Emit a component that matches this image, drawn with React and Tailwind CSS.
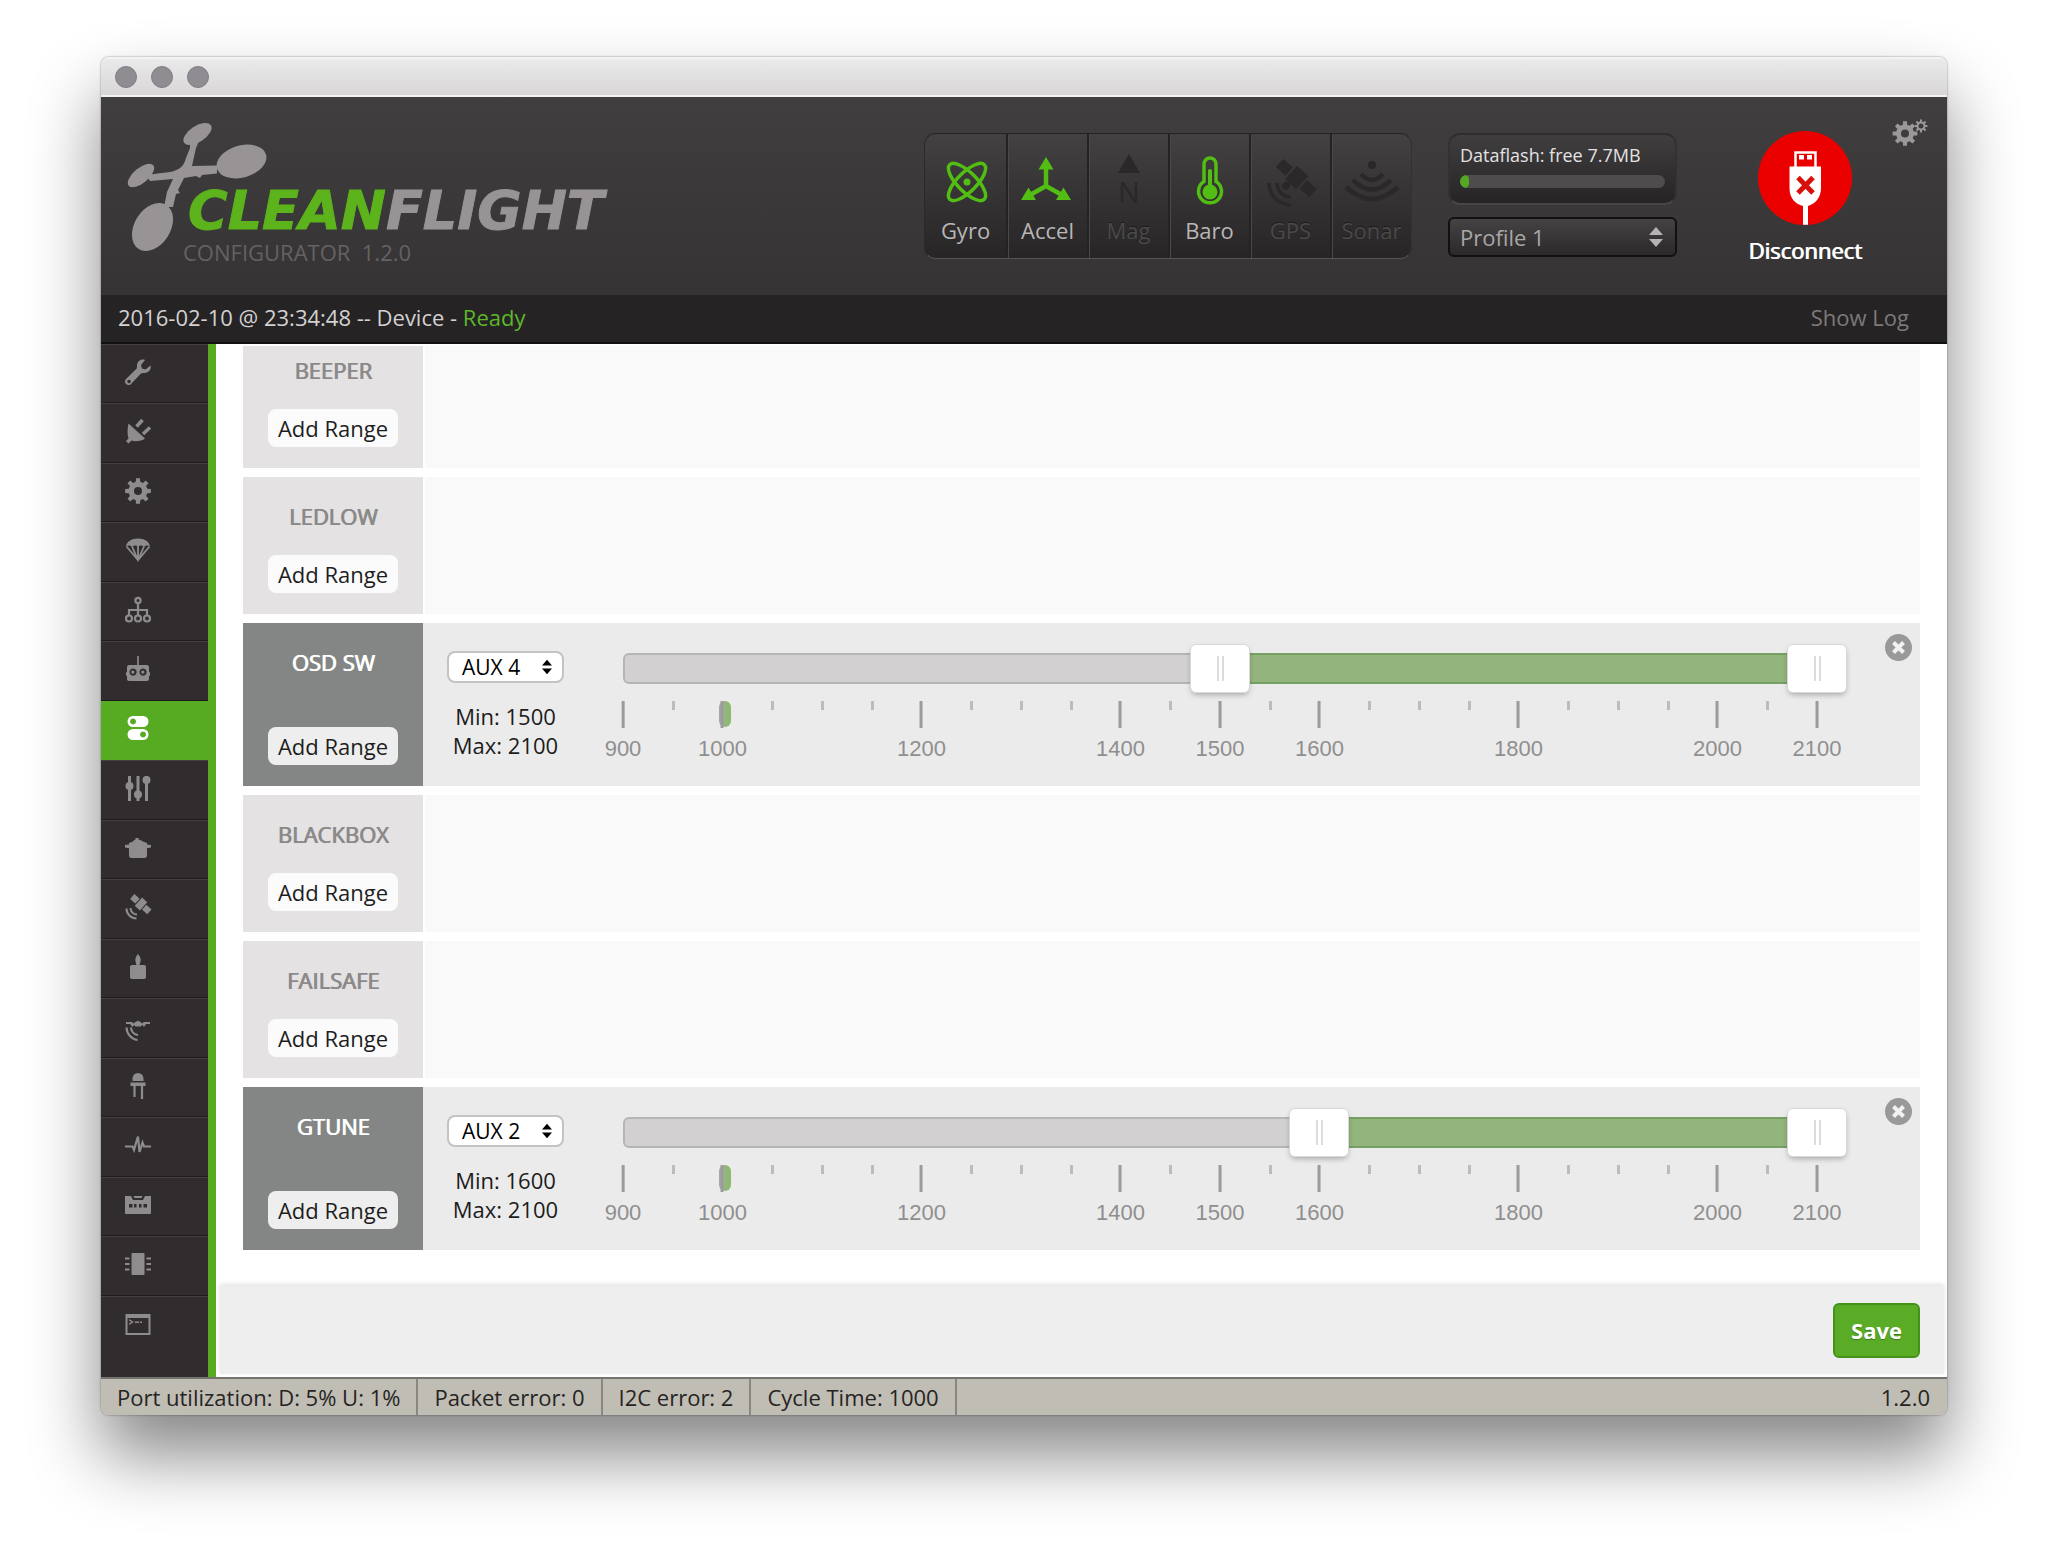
import React, { useState } from "react";

/* ---------- Logo ---------- */

function Logo() {
  return (
    <svg viewBox="120 115 500 156" className="h-[156px] w-[500px] shrink-0" role="img" aria-label="Cleanflight Configurator 1.2.0">
      <g fill="#989496">
        <ellipse cx="197.500" cy="134" rx="16" ry="8" transform="rotate(-33 197.500 134)" />
        <ellipse cx="241.500" cy="161.500" rx="25.500" ry="16" transform="rotate(-16 241.500 161.500)" />
        <ellipse cx="141" cy="175.500" rx="16" ry="7.500" transform="rotate(-40 141 175.500)" />
        <ellipse cx="152.500" cy="227" rx="26" ry="18" transform="rotate(-58 152.500 227)" />
        <path d="M190 138L200 139L196 148L192 166L217 165.500V173.500L202 175L200 178L196 176L184 178L178 190L180 193L176 194L173 207H164L167 192L173 179L150 181L146 175L170 172C180 170 184 166 186 158L190 148Z" />
      </g>
      <text x="188" y="229" fill="#5cb31c" stroke="#5cb31c" fontFamily="DejaVu Sans" fontWeight="700" fontStyle="italic" fontSize="54">
        CLEAN<tspan fill="#989496" stroke="#989496">FLIGHT</tspan>
      </text>
      <text x="183" y="261" fill="#656263" fontFamily="Open Sans" fontSize="22" xmlSpace="preserve">
        {"CONFIGURATOR \u00a01.2.0"}
      </text>
    </svg>
  );
}

/* ---------- Sensor icons ---------- */

const SENSORS = [
  {
    name: "Gyro",
    on: true,
    icon: (
      <g>
        <g fill="none" stroke="currentColor" strokeWidth="3.500">
          <ellipse cx="31" cy="30" rx="24.500" ry="9.500" transform="rotate(45 31 30)" />
          <ellipse cx="31" cy="30" rx="24.500" ry="9.500" transform="rotate(-45 31 30)" />
        </g>
        <circle cx="31" cy="30" r="3.500" fill="currentColor" />
      </g>
    ),
  },
  {
    name: "Accel",
    on: true,
    icon: (
      <g fill="currentColor">
        <path d="M28 5L35.500 17.500H20.500ZM3 48L10.500 35.500L18 48ZM53 48L45.500 35.500L38 48Z" />
        <path d="M28 15V34M28 34L12 43M28 34L44 43" stroke="currentColor" strokeWidth="4.500" />
      </g>
    ),
  },
  {
    name: "Mag",
    on: false,
    icon: (
      <g fill="currentColor">
        <path d="M30 2L41 21H19Z" />
        <text x="30" y="51" fontFamily="Open Sans" fontSize="29" textAnchor="middle">N</text>
      </g>
    ),
  },
  {
    name: "Baro",
    on: true,
    icon: (
      <g>
        <path d="M24 29.500V12a6 6 0 0 1 12 0v17.500a11.500 11.500 0 1 1-12 0z" fill="none" stroke="currentColor" strokeWidth="3.500" />
        <circle cx="30" cy="40" r="7.500" fill="currentColor" />
        <path d="M30 19V40" stroke="currentColor" strokeWidth="4" strokeLinecap="round" />
      </g>
    ),
  },
  {
    name: "GPS",
    on: false,
    icon: (
      <g>
        <g fill="currentColor" transform="rotate(42 36 26)">
          <rect x="13" y="21" width="13" height="11" />
          <rect x="28" y="17" width="15" height="18" />
          <rect x="45" y="21" width="13" height="11" />
          <circle cx="33" cy="39" r="4" />
        </g>
        <g fill="none" stroke="currentColor" strokeWidth="3.500">
          <path d="M8 31A22 22 0 0 0 30 53" />
          <path d="M16 31A14 14 0 0 0 30 45" />
        </g>
      </g>
    ),
  },
  {
    name: "Sonar",
    on: false,
    icon: (
      <g>
        <circle cx="30" cy="13" r="4" fill="currentColor" />
        <g fill="none" stroke="currentColor" strokeWidth="4.500">
          <path d="M19 22Q30 34 41 22" />
          <path d="M11 28Q30 47 49 28" />
          <path d="M4 35Q30 59 56 35" />
        </g>
      </g>
    ),
  },
];

function SensorBar() {
  return (
    <ul className="mt-9 flex shrink-0 overflow-hidden rounded-xl border border-t-[#242223] border-r-[#333132] border-b-[#555354] border-l-[#2b292a] bg-linear-to-b from-[#434142] to-[#272525]">
      {SENSORS.map((s, i) => (
        <li
          key={s.name}
          className={
            "flex h-[124px] w-[81px] flex-col items-center pt-[18px] " +
            (i > 0 ? "border-l-2 border-[#242223] shadow-[inset_1px_0_0_#4a4849]" : "")
          }
        >
          <svg viewBox="0 0 60 60" className={"size-[60px] " + (s.on ? "text-[#52bd12]" : "text-[#2a2829]")} aria-hidden="true">
            {s.icon}
          </svg>
          <span className={"mt-[3px] text-[22px] leading-[30px] " + (s.on ? "text-[#b9b6b7]" : "text-[#4b494a] [text-shadow:0_-1px_0_#1d1b1c]")}>
            {s.name}
          </span>
        </li>
      ))}
    </ul>
  );
}

/* ---------- Shared bits ---------- */

function UpDown({ className }) {
  return (
    <svg viewBox="0 0 14 20" className={className} fill="currentColor" aria-hidden="true">
      <path d="M7 0L14 8H0ZM7 20L14 12H0Z" />
    </svg>
  );
}

function gearPath(cx, cy, ro, ri, hole, teeth) {
  const pt = (r, a) => (cx + r * Math.cos(a)).toFixed(2) + " " + (cy + r * Math.sin(a)).toFixed(2);
  const step = (Math.PI * 2) / teeth;
  let d = "";
  for (let i = 0; i < teeth; i++) {
    const a = i * step - Math.PI / 2;
    d += (i ? "L" : "M") + pt(ri, a - step * 0.3) + "L" + pt(ro, a - step * 0.2) + "L" + pt(ro, a + step * 0.2) + "L" + pt(ri, a + step * 0.3);
  }
  d += "Z";
  d += `M${cx - hole} ${cy}a${hole} ${hole} 0 1 0 ${hole * 2} 0a${hole} ${hole} 0 1 0 ${-hole * 2} 0Z`;
  return d;
}

/* ---------- Header ---------- */

function Header() {
  return (
    <header className="flex h-[198px] items-start bg-linear-to-b from-[#403e3f] to-[#353334] pr-[19px] pl-[19px]">
      <div className="pt-[18px]">
        <Logo />
      </div>
      <div className="flex-1" />
      <SensorBar />
      <div className="mt-9 ml-9 flex w-[229px] shrink-0 flex-col gap-3">
        <div className="h-[72px] rounded-xl border-2 border-t-[#2f2d2e] border-r-[#333132] border-b-[#474546] border-l-[#333132] bg-linear-to-b from-[#403e3f] to-[#262425] px-[10px] pt-2">
          <div className="text-[18px] leading-6 whitespace-nowrap text-[#e4e2e3]">Dataflash: free 7.7MB</div>
          <div className="mt-2 h-[13px] overflow-hidden rounded-full bg-[#4f4c4e]">
            <div className="h-full w-[9px] rounded-full bg-[#56a822]" />
          </div>
        </div>
        <div className="relative">
          <select
            aria-label="Profile"
            defaultValue="1"
            className="h-10 w-full appearance-none rounded-md border-2 border-[#121011] bg-linear-to-b from-[#454344] to-[#2b292a] pl-[10px] text-[22px] leading-7 text-[#a9a6a7]"
          >
            <option value="1">Profile 1</option>
            <option value="2">Profile 2</option>
            <option value="3">Profile 3</option>
          </select>
          <UpDown className="pointer-events-none absolute top-[10px] right-[14px] h-5 w-[14px] text-[#b5b2b3]" />
        </div>
      </div>
      <button type="button" className="mt-[34px] ml-[66px] flex w-[124px] shrink-0 flex-col items-center">
        <svg viewBox="0 0 94 94" className="size-[94px]" aria-hidden="true">
          <circle cx="47" cy="47" r="47" fill="#eb0000" />
          <path d="M37.500 37V21.500H57.500V37" fill="none" stroke="#fff" strokeWidth="2.500" />
          <path d="M41 24h5v4.500h-5zM49 24h5v4.500h-5z" fill="#fff" />
          <path d="M31.500 35.500H63V57C63 67 57 73 50 75V93.800H45V75C37 73 31.500 67 31.500 57Z" fill="#fff" />
          <path d="M40 46.500L55 62M55 46.500L40 62" stroke="#d8100c" strokeWidth="5" />
        </svg>
        <span className="mt-[10px] text-[22px] leading-[30px] text-white [text-shadow:1px_0_currentColor]">Disconnect</span>
      </button>
      <button type="button" aria-label="Options" className="mt-[22px] ml-[25px] shrink-0 text-[#9b9899]">
        <svg viewBox="0 0 36 28" className="h-7 w-9" fill="currentColor" fillRule="evenodd" aria-hidden="true">
          <path d={gearPath(13, 14.5, 12.500, 9, 4, 8)} />
          <path d={gearPath(29, 7, 6.500, 4.500, 2.500, 8)} />
        </svg>
      </button>
    </header>
  );
}

/* ---------- Sidebar ---------- */

const NAV = [
  ["Setup", <path fillRule="evenodd" d="M25.500 6.500L20.500 10.500L17 9.500L16 6L20 1C16 -.5 12 2.500 12 6.500C12 8 12 9 11.500 9.800L1.500 19.500C-.5 21.500 -.5 23.500 1 25C2.500 26.500 5 26.500 6.500 24.500L16 14.500C17 14 18 14.200 19.500 14C23.500 13.800 26.800 10.500 25.500 6.500ZM4 24.300a1.800 1.800 0 1 1 .1 0z" />],
  ["Ports", <g><path d="M3.500 5.500L20 20.500C17 23 10 24 6.500 22.500L3.500 25.500L1 23L3.500 20.500C2 16 2.500 10 3.500 5.500Z" /><path d="M11.500 8.500L17.500 2M18 16L25 9.500" stroke="currentColor" strokeWidth="3.500" /></g>],
  ["Configuration", <path fillRule="evenodd" d={gearPath(13, 13, 13, 9.500, 4, 8)} />],
  ["Failsafe", <g><path d="M1 9.500C1.500 4.500 6.500 1.500 13 1.500S24.500 4.500 25 9.500C23 8 20.500 8 19 10C17 8 15 8 13 9.500C11 8 9 8 7 10C5.500 8 3 8 1 9.500Z" /><path d="M1.500 9.500L13 23L24.500 9.500M7 9.500L13 23L19 9.500M13 9V22" fill="none" stroke="currentColor" strokeWidth="1.800" /></g>],
  ["PID Tuning", <g fill="none" stroke="currentColor" strokeWidth="2.200"><circle cx="13" cy="3.500" r="2.600" /><circle cx="4" cy="21.500" r="3" /><circle cx="13" cy="21.500" r="3" /><circle cx="22" cy="21.500" r="3" /><path d="M13 6.500V18.500M4 18.500V13H22V18.500" /></g>],
  ["Receiver", <path fillRule="evenodd" d="M12.200 0h1.600v9H22c1 0 2 1 2 2v5l1 .5v3l-1 .5v3c0 1-1 2-2 2H4c-1 0-2-1-2-2v-3l-1-.5v-3L2 16v-5c0-1 1-2 2-2h8.200zM8 12.500a3.600 3.600 0 1 0 .1 0zM18 12.500a3.600 3.600 0 1 0 .1 0zM7.900 14.500a1.600 1.600 0 1 1-.1 0zM17.900 14.500a1.600 1.600 0 1 1-.1 0z" />],
  ["Modes", <path fillRule="evenodd" d="M8 1h10a5.500 5.500 0 0 1 0 11H8A5.500 5.500 0 0 1 8 1zM8 3.500a3 3 0 1 0 .1 0zM8 14h10a5.500 5.500 0 0 1 0 11H8a5.500 5.500 0 0 1 0-11zM18 16.500a3 3 0 1 0 .1 0z" />],
  ["Adjustments", <g><path d="M4.500 1V26M13 1V26M21.500 1V26" stroke="currentColor" strokeWidth="3" /><circle cx="4.500" cy="11" r="4" /><circle cx="13" cy="19.500" r="4" /><circle cx="21.500" cy="5" r="4" /></g>],
  ["Servos", <path d="M8 6.500C8.500 5.500 9.500 5 10.500 4.500V3h3v1.500C15 5 16.500 5.500 18 6.500L22 8v1.500l4 .5v2.500l-4 .8V20.500c0 1.500-1 2.500-2.500 2.500h-13C5 23 4 22 4 20.500v-7.200L0 12.500V10l4-.5V8z" />],
  ["GPS", <g><g transform="rotate(42 16 10)"><rect x="4.500" y="7" width="7" height="6.500" /><rect x="12.500" y="4.500" width="7" height="11" /><rect x="20.500" y="7" width="7" height="6.500" /></g><path d="M1.500 14.500A10 10 0 0 0 11.500 24.500M5.500 14A6.500 6.500 0 0 0 12 20.500" fill="none" stroke="currentColor" strokeWidth="2" /></g>],
  ["Motors", <path d="M13 0C15.500 3 16 5 15.500 7.500L14.500 11H19c1.200 0 2 .8 2 2v10c0 1.200-.8 2-2 2H7c-1.200 0-2-.8-2-2V13c0-1.200.8-2 2-2h4.500L10.500 7.500C10 5 10.500 3 13 0Z" />],
  ["Sensors Tracking", <g><path d="M1 9h6l1.500 1.500L11 8.500h1l1-1 1 1h1l2 2 2-1.500h6v2h-4L19 14l-1.500-2-2 1.500h-5L9 12l-1.500 2L5 11H1z" /><path d="M1.500 14.500A13 13 0 0 0 12.500 27M6 14.500A8 8 0 0 0 13 22" fill="none" stroke="currentColor" strokeWidth="2.200" /></g>],
  ["LED Strip", <g><path d="M7.500 8V5.500a5.500 5.500 0 0 1 11 0V8h-11zM5.500 9.500h15V13h-15z" /><path d="M9.500 12v12M17 12v14" stroke="currentColor" strokeWidth="2.200" /></g>],
  ["Sensors", <path d="M0 14.500H7.500L9 18L11 11L13 4.500L14.500 20L17.500 10.500L19 14.500H26" fill="none" stroke="currentColor" strokeWidth="2.200" />],
  ["Logging", <path fillRule="evenodd" d="M0 4h6l2 4h10l2-4h6v17c0 .6-.4 1-1 1H1c-.6 0-1-.4-1-1zM8.500 4h9l-1 2h-7zM4 12v3.500h3.500V12zM9 12v3.500h2.500V12zM14 12v3.500h2.500V12zM18.500 12v3.500H22V12z" />],
  ["Dataflash", <g><rect x="6.500" y="2" width="13" height="22" rx="1" /><path d="M0 7.500h4.500M0 13h4.500M0 18.500h4.500M21.500 7.500H26M21.500 13H26M21.500 18.500H26" stroke="currentColor" strokeWidth="2.200" /></g>],
  ["CLI", <path fillRule="evenodd" d="M.5 3h25v21H.5zM2.500 7v15h21V7zM4 8l5 3-5 3v-1.600L6.500 11 4 9.600zM10 10.500h4v1.500h-4zM15 10.500h2v1.500h-2z" />],
];

function Sidebar() {
  return (
    <nav className="w-[115px] shrink-0 border-r-8 border-[#57ab22] bg-[#312d2f]">
      <ul className="pb-[22px]">
        {NAV.map(([name, icon]) => {
          const active = name === "Modes";
          return (
            <li
              key={name}
              className={
                "odd:h-[59px] even:h-[60px] last:border-b-0 " +
                (active ? "bg-[#57ab22]" : "border-t border-b border-t-[#454143] border-b-[#1f1c1d]")
              }
            >
              <a
                href={"#" + name.toLowerCase().replace(/ /g, "-")}
                aria-label={name}
                className={"flex h-[54px] items-center pl-6 " + (active ? "text-white" : "text-[#8f8c8d]")}
              >
                <svg viewBox="0 0 26 26" className="size-[26px] overflow-visible" fill="currentColor" aria-hidden="true">
                  {icon}
                </svg>
              </a>
            </li>
          );
        })}
      </ul>
    </nav>
  );
}

/* ---------- Modes ---------- */

const AXIS_MIN = 900;
const AXIS_MAX = 2100;
const MAJOR = [900, 1000, 1200, 1400, 1500, 1600, 1800, 2000, 2100];
const MINOR = [950, 1050, 1100, 1150, 1250, 1300, 1350, 1450, 1550, 1650, 1700, 1750, 1850, 1900, 1950, 2050];
const at = (v) => ((v - AXIS_MIN) / (AXIS_MAX - AXIS_MIN)) * 100 + "%";

const THUMB =
  "pointer-events-none absolute top-[-11px] left-[-32px] h-[49px] w-[calc(100%+64px)] appearance-none bg-transparent " +
  "[&::-webkit-slider-thumb]:pointer-events-auto [&::-webkit-slider-thumb]:h-[49px] [&::-webkit-slider-thumb]:w-[60px] " +
  "[&::-webkit-slider-thumb]:appearance-none [&::-webkit-slider-thumb]:rounded-md [&::-webkit-slider-thumb]:border " +
  "[&::-webkit-slider-thumb]:border-[#d9d9d9] [&::-webkit-slider-thumb]:bg-white " +
  "[&::-webkit-slider-thumb]:bg-[linear-gradient(90deg,#dcdcdc_2px,transparent_2px,transparent_5px,#dcdcdc_5px)] " +
  "[&::-webkit-slider-thumb]:bg-[length:7px_25px] [&::-webkit-slider-thumb]:bg-center [&::-webkit-slider-thumb]:bg-no-repeat " +
  "[&::-webkit-slider-thumb]:shadow-[0_3px_6px_-2px_rgba(0,0,0,0.35)]";

function RangeRow({ mode, aux, from, to }) {
  const [lo, setLo] = useState(from);
  const [hi, setHi] = useState(to);
  return (
    <div className="flex flex-1 items-start bg-[#ebebeb] pr-2 pl-6">
      <div className="flex w-[117px] shrink-0 flex-col items-center pt-7">
        <div className="relative w-full">
          <select
            aria-label={mode + " channel"}
            defaultValue={aux}
            className="h-8 w-full appearance-none rounded-lg border-2 border-[#c3c3c3] bg-white pl-[13px] text-[21px] leading-6 text-black"
          >
            {["AUX 1", "AUX 2", "AUX 3", "AUX 4"].map((o) => (
              <option key={o}>{o}</option>
            ))}
          </select>
          <UpDown className="pointer-events-none absolute top-[7px] right-3 h-[18px] w-[10px] text-black" />
        </div>
        <div className="mt-[19px] text-center text-[22px] leading-[29px] whitespace-nowrap text-[#1c1c1c]">
          <div>Min: {lo}</div>
          <div>Max: {hi}</div>
        </div>
      </div>
      <div className="ml-[59px] min-w-0 flex-1 pt-[30px]">
        <div className="relative h-[31px] rounded-md border-2 border-[#b5b5b5] bg-[#d3d0d2]">
          <div
            className="absolute -top-0.5 -bottom-0.5 border-y-2 border-[#77a064] bg-[#93b47c]"
            style={{ left: at(lo), right: 100 - parseFloat(at(hi)) + "%" }}
          />
          <input type="range" aria-label={mode + " minimum"} min={AXIS_MIN} max={AXIS_MAX} step="25" value={lo} onChange={(e) => setLo(Math.min(+e.target.value, hi))} className={THUMB} />
          <input type="range" aria-label={mode + " maximum"} min={AXIS_MIN} max={AXIS_MAX} step="25" value={hi} onChange={(e) => setHi(Math.max(+e.target.value, lo))} className={THUMB} />
        </div>
        <div className="relative mt-[17px] h-[70px]">
          <div className="absolute top-0 h-[26px] w-3 -translate-x-1 rounded-full bg-linear-to-r from-[#a3ad9c] from-45% to-[#8fb873] to-50%" style={{ left: at(1000) }} />
          {MINOR.map((v) => (
            <div key={v} className="absolute top-0 h-[9px] w-[3px] -translate-x-px bg-[#bcbcbc]" style={{ left: at(v) }} />
          ))}
          {MAJOR.map((v) => (
            <div key={v} className="absolute top-0 flex -translate-x-1/2 flex-col items-center" style={{ left: at(v) }}>
              <div className="h-[27px] w-[3px] bg-[#9b9b9b]" />
              <div className="mt-2 font-['Liberation_Sans',sans-serif] text-[22px] leading-[26px] text-[#8f8f8f]">{v}</div>
            </div>
          ))}
        </div>
      </div>
      <button type="button" aria-label={"Remove " + mode + " range"} className="mt-[11px] ml-[68px] shrink-0">
        <svg viewBox="0 0 27 27" className="size-[27px]" aria-hidden="true">
          <circle cx="13.500" cy="13.500" r="13.500" fill="#999" />
          <path d="M8.500 8.500L18.500 18.500M18.500 8.500L8.500 18.500" stroke="#f2f2f2" strokeWidth="4" />
        </svg>
      </button>
    </div>
  );
}

const MODES = [
  { name: "BEEPER", clipped: true },
  { name: "LEDLOW" },
  { name: "OSD SW", range: { aux: "AUX 4", from: 1500, to: 2100 } },
  { name: "BLACKBOX" },
  { name: "FAILSAFE" },
  { name: "GTUNE", range: { aux: "AUX 2", from: 1600, to: 2100 } },
];

function ModeRow({ name, range, clipped }) {
  return (
    <section className="flex">
      <div
        className={
          "flex w-[180px] shrink-0 flex-col items-center justify-between pb-[21px] " +
          (range ? "h-[163px] bg-[#838684] pt-6 " : clipped ? "h-[122px] bg-[#e4e2e3] pt-[9px] " : "h-[137px] bg-[#e4e2e3] pt-6 ")
        }
      >
        <h2 className={"text-[22px] leading-[30px] font-normal [text-shadow:1px_0_currentColor] " + (range ? "text-white" : "text-[#8b8989]")}>{name}</h2>
        <button
          type="button"
          className={"h-[38px] w-[130px] rounded-lg text-[22px] leading-[30px] text-[#1e1e1e] " + (range ? "bg-[#edeeed]" : "bg-[#fbfbfb]")}
        >
          Add Range
        </button>
      </div>
      {range ? <RangeRow mode={name} {...range} /> : <div className="ml-0.5 flex-1 bg-[#f9f9f9]" />}
    </section>
  );
}

/* ---------- Status bar ---------- */

function StatusBar() {
  return (
    <footer className="flex h-[38px] items-stretch border-t-2 border-[#75736e] bg-[#c0bdb4] text-[22px] leading-9 whitespace-nowrap text-[#262423]">
      {["Port utilization: D: 5% U: 1%", "Packet error: 0", "I2C error: 2", "Cycle Time: 1000"].map((t) => (
        <div key={t} className="border-r-2 border-[#8a8780] px-4">
          {t}
        </div>
      ))}
      <div className="flex-1" />
      <div className="pr-[17px]">1.2.0</div>
    </footer>
  );
}

export default function App() {
  return (
    <div className="min-h-screen bg-white px-[101px] pt-[57px] pb-36 font-['Open_Sans',sans-serif]">
      <div className="overflow-hidden rounded-lg shadow-[0_0_2px_rgba(0,0,0,0.5),0_40px_70px_rgba(0,0,0,0.48)]">
        <div className="flex h-10 items-center gap-[14px] border-t-2 border-b-2 border-[#f4f3f4] bg-linear-to-b from-[#ebeaeb] to-[#d8d6d7] pl-[14px]">
          {["Close", "Minimize", "Zoom"].map((t) => (
            <button key={t} type="button" aria-label={t} className="size-[22px] rounded-full border border-[#7f7c83] bg-[#8f8c92]" />
          ))}
        </div>
        <Header />
        <div className="flex h-[49px] items-center justify-between border-b-2 border-[#111] bg-[#252324] pr-[38px] pb-1 pl-[17px] text-[22px] leading-[30px]">
          <div className="text-[#d3d1d2]">
            2016-02-10 @ 23:34:48 -- Device - <span className="text-[#5cb82a]">Ready</span>
          </div>
          <button type="button" className="text-[#7d7a7b]">Show Log</button>
        </div>
        <div className="flex bg-white">
          <Sidebar />
          <main className="flex min-w-0 flex-1 flex-col">
            <div className="flex flex-col gap-[9px] pt-0.5 pr-[27px] pb-[36px] pl-[27px]">
              {MODES.map((m) => (
                <ModeRow key={m.name} {...m} />
              ))}
            </div>
            <div className="mr-[3px] mb-[3px] ml-1 flex flex-1 items-center justify-end bg-[#eeeeee] pr-6 shadow-[0_-2px_5px_rgba(0,0,0,0.12)]">
              <button
                type="button"
                className="h-[55px] w-[87px] rounded-md border-2 border-[#45921a] bg-[#5aab26] text-[22px] leading-[30px] font-bold text-white [text-shadow:0_1px_1px_rgba(0,0,0,0.3)]"
              >
                Save
              </button>
            </div>
          </main>
        </div>
        <StatusBar />
      </div>
    </div>
  );
}
